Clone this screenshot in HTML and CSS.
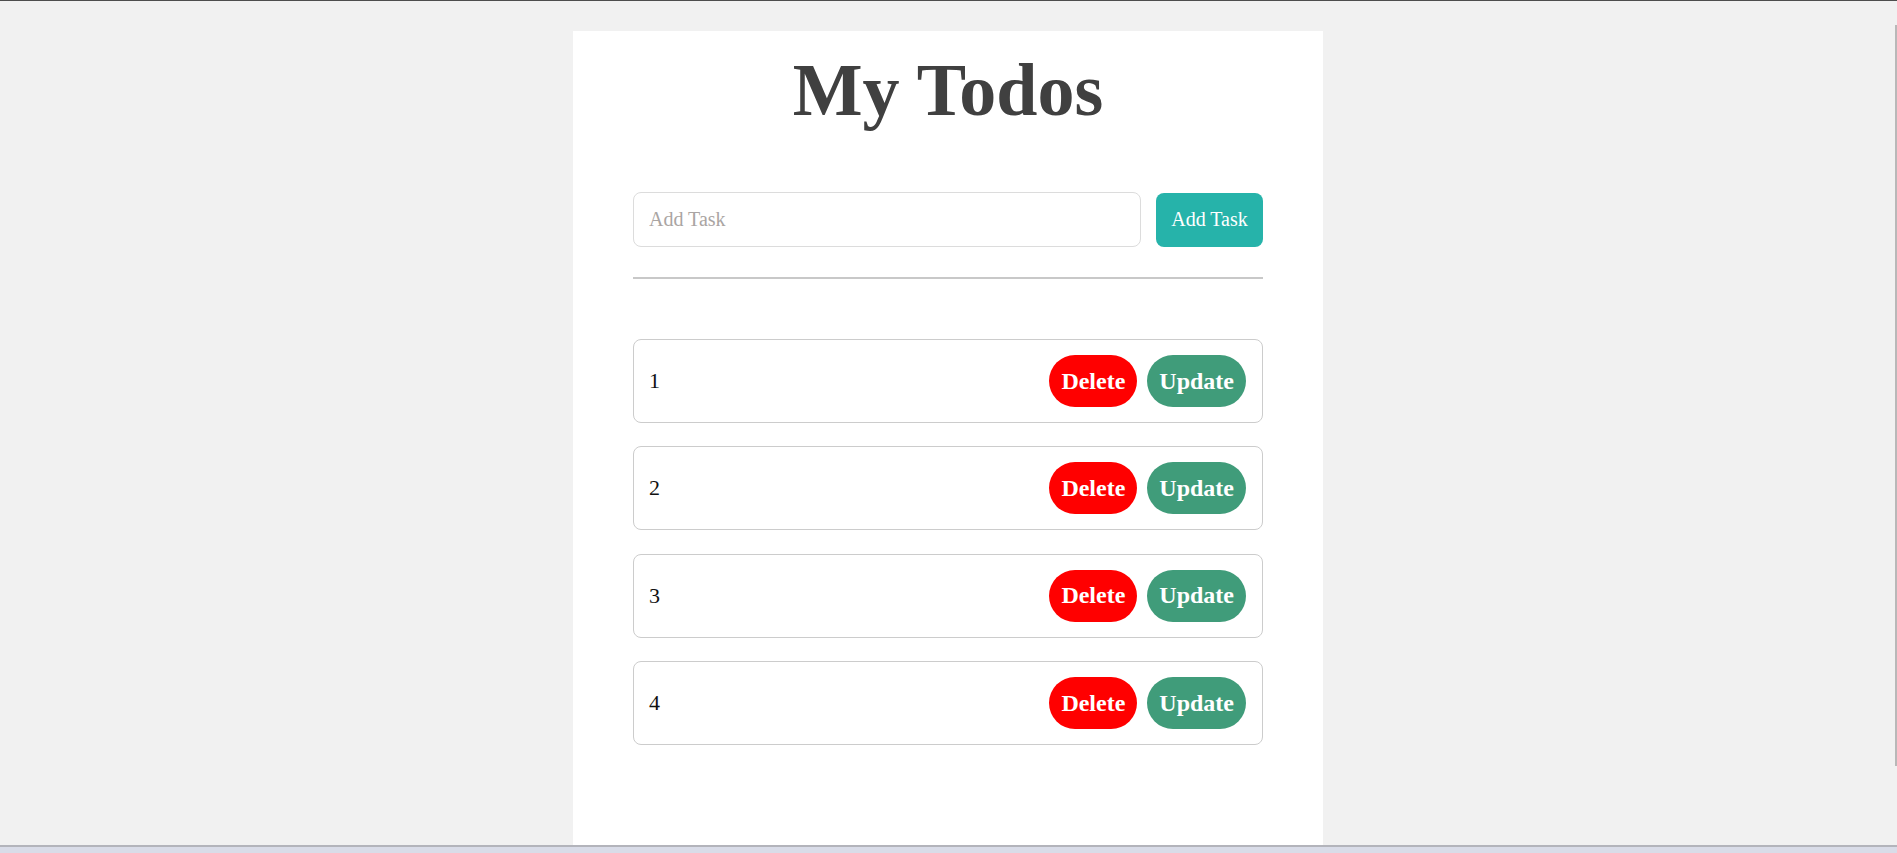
FILE: index.html
```html
<!DOCTYPE html>
<html lang="en">
<head>
<meta charset="utf-8">
<title>My Todos</title>
<link rel="stylesheet" href="styles.css">
</head>
<body>
<div class="screen">
  <main class="stage">
    <section class="card">
      <h1 class="title">My Todos</h1>
      <form class="add-form">
        <input class="task-input" type="text" placeholder="Add Task">
        <button class="add-btn" type="button">Add Task</button>
      </form>
      <hr class="divider">
      <ul class="todo-list">
        <li class="todo"><span class="todo-text">1</span><div class="todo-actions"><button class="pill pill-delete" type="button">Delete</button><button class="pill pill-update" type="button">Update</button></div></li>
        <li class="todo"><span class="todo-text">2</span><div class="todo-actions"><button class="pill pill-delete" type="button">Delete</button><button class="pill pill-update" type="button">Update</button></div></li>
        <li class="todo"><span class="todo-text">3</span><div class="todo-actions"><button class="pill pill-delete" type="button">Delete</button><button class="pill pill-update" type="button">Update</button></div></li>
        <li class="todo"><span class="todo-text">4</span><div class="todo-actions"><button class="pill pill-delete" type="button">Delete</button><button class="pill pill-update" type="button">Update</button></div></li>
      </ul>
    </section>
    <div class="scroll-edge"></div>
  </main>
  <div class="taskbar"></div>
</div>
</body>
</html>
```
FILE: styles.css
```css
* { box-sizing: border-box; }
html, body { margin: 0; padding: 0; }
body {
  background: #f1f1f1;
  font-family: "Liberation Serif", "Times New Roman", serif;
  overflow: hidden;
}
.screen {
  height: 853px;
  display: flex;
  flex-direction: column;
  border-top: 1px solid #4d4d4d;
}
.stage {
  flex: 1;
  display: flex;
  justify-content: center;
  padding: 30px 1px 0 0;
  min-height: 0;
}
.card {
  width: 750px;
  background: #ffffff;
  padding: 18px 60px 0;
}
.title {
  margin: 0;
  text-align: center;
  font-size: 74px;
  font-weight: bold;
  color: #404040;
  line-height: 83px;
}
.add-form {
  margin: 60px 0 0;
  display: flex;
  align-items: center;
  gap: 15px;
}
.task-input {
  flex: 1;
  height: 55px;
  border: 1px solid #dcdcdc;
  border-radius: 8px;
  padding: 0 15px;
  font-family: "Liberation Serif", "Times New Roman", serif;
  font-size: 20px;
  color: #222;
  outline: none;
}
.task-input::placeholder { color: #aaa5a3; }
.add-btn {
  width: 107px;
  height: 54px;
  border: none;
  border-radius: 8px;
  background: #26b3aa;
  color: #ffffff;
  font-family: "Liberation Serif", "Times New Roman", serif;
  font-size: 20px;
  padding: 0;
}
.divider {
  margin: 30px 0 0;
  border: none;
  height: 2px;
  background: #c8c8c8;
}
.todo-list {
  list-style: none;
  margin: 60px 0 0;
  padding: 0;
  display: flex;
  flex-direction: column;
  gap: 23.4px;
}
.todo {
  height: 84px;
  border: 1px solid #cccccc;
  border-radius: 8px;
  padding: 0 16px 0 15px;
  display: flex;
  align-items: center;
  justify-content: space-between;
}
.todo-text {
  font-size: 22px;
  color: #111;
}
.todo-actions {
  display: flex;
  gap: 10px;
}
.pill {
  height: 52px;
  border: none;
  border-radius: 26px;
  padding: 0 12px;
  color: #ffffff;
  font-family: "Liberation Serif", "Times New Roman", serif;
  font-size: 24px;
  font-weight: bold;
}
.pill-delete { background: #ff0000; }
.pill-update { background: #409c7a; }
.scroll-edge {
  position: fixed;
  top: 25px;
  right: 0;
  width: 2px;
  height: 741px;
  background: #b8b8b8;
}
.taskbar {
  height: 8px;
  border-top: 2px solid #b3b4bb;
  background: #d9dce8;
}
```
